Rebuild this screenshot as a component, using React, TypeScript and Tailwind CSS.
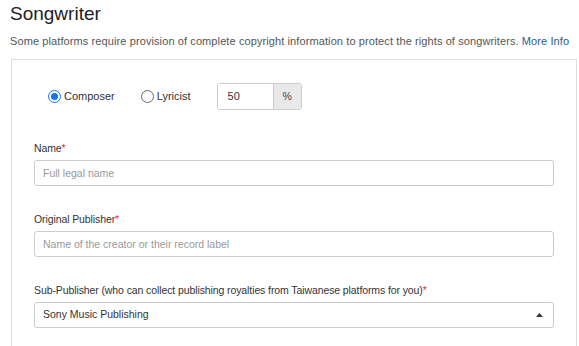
const Field = ({ label, children }: { label: string; children: React.ReactNode }) => (
  <div className="mt-[25px] first:mt-0">
    <label className="block h-[16px] text-[10.5px] leading-[16px] tracking-[-0.1px] text-[#333]">
      {label}
      <span className="text-[#e0303a]">*</span>
    </label>
    <div className="mt-[4px]">{children}</div>
  </div>
);

const Radio = ({ checked, label }: { checked?: boolean; label: string }) => (
  <label className="flex items-center gap-[3px] text-[11px] text-[#333]">
    {checked ? (
      <span className="flex h-[13px] w-[13px] items-center justify-center rounded-full border-[1.5px] border-[#1672f3] bg-white">
        <span className="h-[7px] w-[7px] rounded-full bg-[#1672f3]" />
      </span>
    ) : (
      <span className="h-[13px] w-[13px] rounded-full border border-[#6b6b6b] bg-white" />
    )}
    {label}
  </label>
);

export default function App() {
  return (
    <div className="min-h-[346px] bg-white pl-[10px] pr-[2px] font-['Liberation_Sans',Arial,sans-serif]">
      <h2 className="pt-[1px] text-[19px] leading-[26px] text-[#222]">Songwriter</h2>
      <p className="mt-[7px] text-[11px] leading-[14px] tracking-[0.1px] text-[#555]">
        Some platforms require provision of complete copyright information to protect the rights of songwriters.{" "}
        <a href="#" className="text-[#2a5b8c]">More Info</a>
      </p>

      <div className="ml-[1px] mt-[11px] border border-[#ddd] px-[22px] pb-[30px] pt-[23px]">
        <div className="flex h-[27px] items-center pl-[14px]">
          <Radio checked label="Composer" />
          <div className="ml-[26px]">
            <Radio label="Lyricist" />
          </div>
          <div className="ml-[26px] flex h-[27px] w-[85px] overflow-hidden rounded-[3px] border border-[#ccc]">
            <input
              defaultValue="50"
              className="w-[56px] border-r border-[#ccc] bg-white px-[10px] text-[11px] text-[#333] outline-none"
            />
            <span className="flex flex-1 items-center justify-center bg-[#e9e9e9] text-[10.5px] text-[#444]">%</span>
          </div>
        </div>

        <div className="mt-[30px]">
          <Field label="Name">
            <input
              placeholder="Full legal name"
              className="h-[26px] w-full rounded-[3px] border border-[#ccc] px-[8px] text-[10.5px] text-[#333] outline-none placeholder:text-[#999]"
            />
          </Field>
          <Field label="Original Publisher">
            <input
              placeholder="Name of the creator or their record label"
              className="h-[26px] w-full rounded-[3px] border border-[#ccc] px-[8px] text-[10.5px] text-[#333] outline-none placeholder:text-[#999]"
            />
          </Field>
          <Field label="Sub-Publisher (who can collect publishing royalties from Taiwanese platforms for you)">
            <div className="flex h-[26px] w-full items-center justify-between rounded-[3px] border border-[#ccc] pl-[8px] pr-[10px] text-[10.5px] text-[#333]">
              <span>Sony Music Publishing</span>
              <svg width="7" height="4" viewBox="0 0 7 4">
                <path d="M0 4L3.5 0L7 4Z" fill="#333" />
              </svg>
            </div>
          </Field>
        </div>
      </div>
    </div>
  );
}
